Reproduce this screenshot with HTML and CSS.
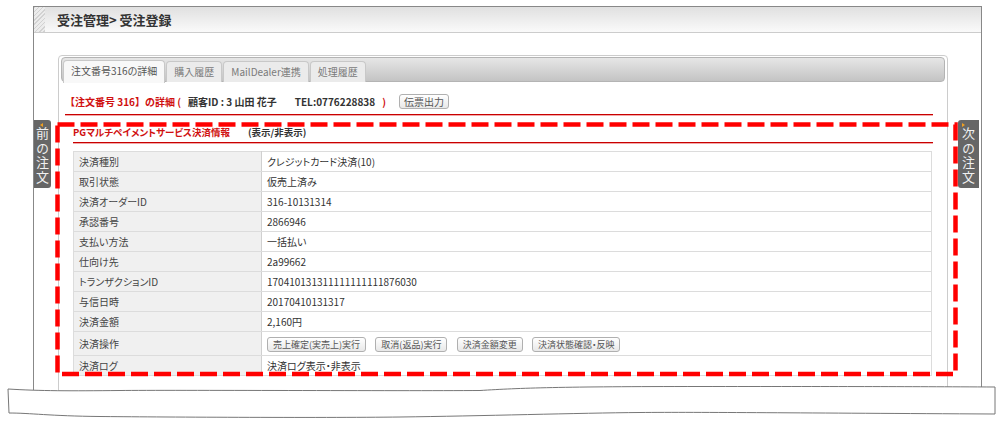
FILE: index.html
```html
<!DOCTYPE html>
<html lang="ja">
<head>
    <meta charset="UTF-8">
    <title>受注登録</title>
    <link rel="stylesheet" href="styles.css">
</head>
<body>
    <div class="frame">
        <div class="page-head">
            <span class="stripe"></span>
            <h1>受注管理&gt; 受注登録</h1>
        </div>

        <div class="main">
            <a class="side side-prev"><span class="arrow"></span>前の注文</a>

            <div class="panel">
                <ul class="tabs">
                    <li class="active">注文番号316の詳細</li>
                    <li>購入履歴</li>
                    <li>MailDealer連携</li>
                    <li>処理履歴</li>
                </ul>

                <div class="order-head">
                    <span class="red">【注文番号 316】の詳細 (</span>
                    <span class="cust">顧客ID : 3 山田 花子</span>
                    <span class="cust tel">TEL:0776228838</span>
                    <span class="red">)</span>
                    <button class="btn">伝票出力</button>
                </div>

                <div class="pg">
                    <h2><span class="red">PGマルチペイメントサービス決済情報</span><span class="toggle">(表示/非表示)</span></h2>
                    <table class="pg-table">
                        <tr><td class="label">決済種別</td><td>クレジットカード決済(10)</td></tr>
                        <tr><td class="label">取引状態</td><td>仮売上済み</td></tr>
                        <tr><td class="label">決済オーダーID</td><td>316-10131314</td></tr>
                        <tr><td class="label">承認番号</td><td>2866946</td></tr>
                        <tr><td class="label">支払い方法</td><td>一括払い</td></tr>
                        <tr><td class="label">仕向け先</td><td>2a99662</td></tr>
                        <tr><td class="label">トランザクションID</td><td>170410131311111111111876030</td></tr>
                        <tr><td class="label">与信日時</td><td>20170410131317</td></tr>
                        <tr><td class="label">決済金額</td><td>2,160円</td></tr>
                        <tr class="ops">
                            <td class="label">決済操作</td>
                            <td>
                                <button class="btn">売上確定(実売上)実行</button>
                                <button class="btn">取消(返品)実行</button>
                                <button class="btn">決済金額変更</button>
                                <button class="btn">決済状態確認・反映</button>
                            </td>
                        </tr>
                        <tr><td class="label">決済ログ</td><td>決済ログ表示・非表示</td></tr>
                    </table>
                </div>
            </div>

            <a class="side side-next"><span class="arrow"></span>次の注文</a>
        </div>
    </div>

    <svg class="tear" width="1007" height="38" viewBox="0 0 1007 38">
        <path d="M8,6 C40,8 70,8 120,7.5 S400,8 480,7.5 C520,5 560,3.5 700,3.5 S900,3.5 995,4 L995,31 C800,30 700,29 640,29.5 S480,33 400,34 S150,34 100,33.5 S30,30 9,30 Z"
              fill="#fff" stroke="#777" stroke-width="1"/>
    </svg>

    <svg class="mark" width="904" height="256" viewBox="0 0 904 256">
        <rect x="2.5" y="2.5" width="898" height="249.5" fill="none" stroke="#f00" stroke-width="4.5" stroke-dasharray="17 6"/>
    </svg>
</body>
</html>
```

FILE: styles.css
```css
body {
    margin: 0;
    width: 1007px;
    height: 422px;
    overflow: hidden;
    position: relative;
    background: #fff;
    color: #333;
    font-family: "Noto Sans CJK JP", "Noto Sans", sans-serif;
    font-size: 10px;
    font-feature-settings: "palt";
}

.frame {
    margin: 6px 0 0 33px;
    width: 947px;
    height: 383px;
    border: 1px solid #888;
    border-bottom: none;
    overflow: hidden;
}

.page-head {
    display: flex;
    height: 25px;
    border-bottom: 1px solid #ccc;
    background: linear-gradient(#e0e0e0, #fafafa);
}

.page-head .stripe {
    width: 11px;
    background: repeating-linear-gradient(135deg, #d2d2d2 0 1px, #ececec 1px 3px);
}

.page-head h1 {
    margin: 0;
    padding-left: 12px;
    font-size: 13px;
    line-height: 25px;
    font-weight: bold;
    color: #333;
}

.main {
    display: flex;
    align-items: flex-start;
    padding-top: 22px;
}

.side {
    position: relative;
    margin-top: 65px;
    height: 68px;
    box-sizing: border-box;
    padding-top: 7px;
    background: #666;
    color: #f0f0f0;
    font-size: 13px;
    letter-spacing: 1.5px;
    writing-mode: vertical-rl;
    text-orientation: upright;
    font-feature-settings: normal;
}

.side-prev {
    width: 18px;
    line-height: 18px;
    margin-left: -1px;
    border-radius: 0 3px 3px 0;
}

.side-next {
    width: 21px;
    line-height: 21px;
    margin-left: 10px;
    border-radius: 3px 0 0 3px;
}

.side .arrow {
    position: absolute;
    top: 3px;
    left: 7px;
    width: 0;
    height: 0;
    border-top: 2px solid transparent;
    border-bottom: 2px solid transparent;
}

.side-prev .arrow {
    border-right: 3px solid #f0a020;
}

.side-next .arrow {
    left: 4px;
    border-left: 3px solid #f0a020;
}

.panel {
    margin-left: 7px;
    width: 884px;
    height: 400px;
    padding: 1px 2px;
    border: 1px solid #ccc;
    border-radius: 4px;
}

.tabs {
    list-style: none;
    margin: 0;
    padding: 2px 0 0 1px;
    height: 21px;
    display: flex;
    gap: 1px;
    border: 1px solid #b4b4b4;
    border-radius: 4px;
    background: linear-gradient(#e6e6e6, #c4c4c4);
}

.tabs li {
    height: 20px;
    margin-top: 1px;
    padding: 0 7px;
    line-height: 20px;
    border: 1px solid #c8c8c8;
    border-bottom: none;
    border-radius: 4px 4px 0 0;
    background: #ebebeb;
    color: #7a7a7a;
}

.tabs li.active {
    height: 22px;
    margin-top: 0;
    background: #f8f8f8;
    color: #555;
}

.red {
    color: #d01010;
}

.order-head {
    display: flex;
    align-items: center;
    margin: 0 12px 0 4px;
    padding: 12px 0 5px;
    font-weight: bold;
    font-feature-settings: normal;
    border-bottom: 1px solid #c80000;
    box-shadow: 0 1px 0 #f3a8a8;
}

.order-head .cust {
    margin-left: 7px;
    color: #333;
}

.order-head .tel {
    margin-left: 18px;
}

.order-head .cust + .red {
    margin-left: 7px;
}

.order-head .btn {
    margin-left: 13px;
    padding: 0 4px;
    font-size: 10px;
}

.btn {
    height: 15px;
    padding: 0 5px;
    font-family: inherit;
    font-size: 9px;
    font-weight: normal;
    line-height: 13px;
    color: #555;
    border: 1px solid #b0b0b0;
    border-radius: 3px;
    background: linear-gradient(#fff, #e8e8e8);
    font-feature-settings: "palt";
}

.pg {
    margin: 0 12px 0 4px;
    padding-left: 8px;
}

.pg h2 {
    margin: 8px 0 0;
    padding: 2px 0 2px;
    font-size: 9.5px;
    line-height: 15px;
    font-weight: bold;
    border-bottom: 1px solid #c80000;
    box-shadow: 0 1px 0 #f3a8a8;
}

.pg h2 .toggle {
    margin-left: 18px;
    color: #333;
}

.pg-table {
    margin-top: 8px;
    width: 859px;
    border-collapse: collapse;
}

.pg-table td {
    height: 19px;
    padding: 0 5px;
    border: 1px solid #dcdcdc;
    color: #333;
}

.pg-table td.label {
    width: 177px;
    background: #f0f0f0;
    color: #444;
    border-right-color: #d0d0d0;
}

.pg-table tr.ops td {
    height: 23px;
}

.pg-table tr.ops .btn {
    margin-right: 7px;
}

.tear {
    display: block;
    position: relative;
    margin-top: -7px;
}

.mark {
    position: absolute;
    left: 55px;
    top: 122px;
}
```
